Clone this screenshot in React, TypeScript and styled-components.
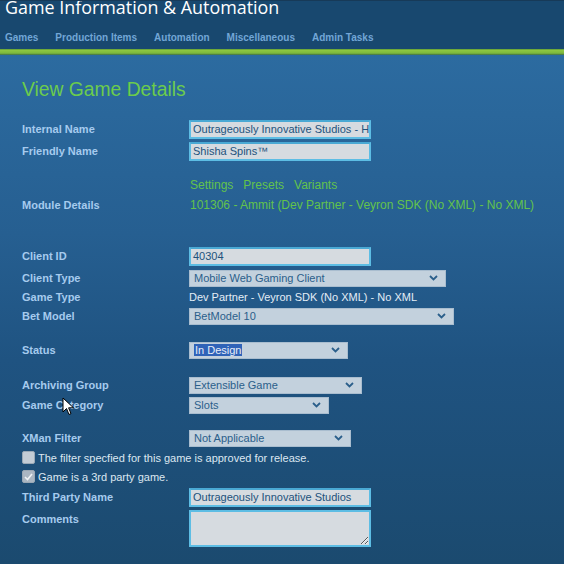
import React from "react";
import styled, { createGlobalStyle } from "styled-components";

const GlobalStyle = createGlobalStyle`
  html, body {
    margin: 0;
    padding: 0;
    height: 100%;
    overflow: hidden;
  }
  body {
    font-family: "Liberation Sans", Arial, sans-serif;
    background: #1b4a6f;
  }
`;

const Page = styled.div`
  position: relative;
  width: 564px;
  height: 564px;
  overflow: hidden;
  display: flex;
  flex-direction: column;
`;

const Header = styled.header`
  background: #18486f;
  border-top: 1px solid #173a58;
  display: flex;
  flex-direction: column;
  padding: 0 5px;
  height: 48px;
  overflow: hidden;
`;

const SiteTitle = styled.h1`
  margin: -6px 0 0;
  font-family: "Open Sans", "Liberation Sans", sans-serif;
  font-weight: 400;
  font-size: 17.9px;
  line-height: 24px;
  color: #ffffff;
`;

const Nav = styled.nav`
  display: flex;
  gap: 17px;
  margin-top: 12px;
`;

const NavLink = styled.a`
  font-size: 10px;
  font-weight: 700;
  color: #72a6d6;
  text-decoration: none;
  line-height: 14px;
`;

const GreenBar = styled.div`
  height: 6px;
  background: linear-gradient(to bottom, #5e9a36 0%, #8cc541 25%, #7db83c 70%, #3d6a49 100%);
`;

const Body = styled.main`
  flex: 1;
  background: linear-gradient(to bottom, #2c6ba0 0%, #265f91 35%, #1f5381 60%, #1b4a6f 100%);
  padding: 24px 0 0 22px;
`;

const PageTitle = styled.h2`
  margin: 0 0 17px;
  font-weight: 400;
  font-size: 19.3px;
  line-height: 22px;
  color: #6ccc4c;
`;

const Row = styled.div<{ $h?: number; $gap?: number; $top?: boolean }>`
  display: grid;
  grid-template-columns: 167px 1fr;
  align-items: ${(p) => (p.$top ? "start" : "center")};
  height: ${(p) => p.$h ?? 22}px;
  margin-top: ${(p) => p.$gap ?? 0}px;
`;

const Label = styled.label<{ $pt?: number }>`
  font-size: 11px;
  font-weight: 700;
  color: #a6cbee;
  padding-top: ${(p) => p.$pt ?? 0}px;
`;

const TextInput = styled.div<{ $w?: number }>`
  box-sizing: border-box;
  width: ${(p) => p.$w ?? 182}px;
  height: 19px;
  border: 2px solid #5dbde4;
  border-top-color: #4aa9d4;
  background: #d6dbe0;
  color: #22527c;
  font-size: 11px;
  line-height: 15px;
  padding: 0 2px;
  white-space: nowrap;
  overflow: hidden;
`;

const TextArea = styled.textarea`
  box-sizing: border-box;
  width: 182px;
  height: 37px;
  margin-top: 2px;
  border: 2px solid #5dbde4;
  background: #d6dbe0;
  color: #22527c;
  font-family: "Liberation Sans", Arial, sans-serif;
  font-size: 11px;
  padding: 2px;
  resize: both;
  outline: none;
`;

const SelectBox = styled.div<{ $w: number }>`
  box-sizing: border-box;
  width: ${(p) => p.$w}px;
  height: 17px;
  border: 1px solid #a9bdcf;
  background: #c3d1dd;
  color: #2b5f8b;
  font-size: 11px;
  display: flex;
  align-items: center;
  justify-content: space-between;
  padding: 0 7px 0 4px;
`;

const Selected = styled.span`
  background: #2f63b8;
  color: #e8eef8;
  padding: 0 1px;
  line-height: 13px;
`;

const Value = styled.span`
  font-size: 11px;
  color: #e3edf6;
`;

const GreenLinks = styled.div`
  display: flex;
  gap: 10px;
  font-size: 12px;
  color: #63c34b;
  padding-left: 1px;
`;

const GreenText = styled.span`
  font-size: 12px;
  color: #63c34b;
  padding-left: 1px;
`;

const CheckRow = styled.div`
  display: flex;
  align-items: center;
  gap: 3px;
  height: 19px;
  font-size: 11px;
  color: #dce7f1;
`;

const Box = styled.span<{ $checked?: boolean }>`
  width: 11px;
  height: 11px;
  border-radius: 2px;
  background: ${(p) => (p.$checked ? "#aab6c2" : "#c3ccd5")};
  border: 1px solid #9aa8b5;
  display: flex;
  align-items: center;
  justify-content: center;
`;

const Cursor = styled.svg`
  position: absolute;
  left: 62px;
  top: 397px;
`;

const Chevron = () => (
  <svg width="9" height="6" viewBox="0 0 9 6">
    <path d="M1 1 L4.5 4.5 L8 1" fill="none" stroke="#2b5f8b" strokeWidth="1.8" />
  </svg>
);

const Select: React.FC<{ w: number; children: React.ReactNode }> = ({ w, children }) => (
  <SelectBox $w={w}>
    <span>{children}</span>
    <Chevron />
  </SelectBox>
);

export default function App() {
  return (
    <Page>
      <GlobalStyle />
      <Header>
        <SiteTitle>Game Information &amp; Automation</SiteTitle>
        <Nav>
          <NavLink>Games</NavLink>
          <NavLink>Production Items</NavLink>
          <NavLink>Automation</NavLink>
          <NavLink>Miscellaneous</NavLink>
          <NavLink>Admin Tasks</NavLink>
        </Nav>
      </Header>
      <GreenBar />
      <Body>
        <PageTitle>View Game Details</PageTitle>
        <Row>
          <Label>Internal Name</Label>
          <TextInput>Outrageously Innovative Studios - HTML5 Shisha Spins</TextInput>
        </Row>
        <Row>
          <Label>Friendly Name</Label>
          <TextInput>Shisha Spins™</TextInput>
        </Row>
        <Row $h={20} $gap={13}>
          <span />
          <GreenLinks>
            <span>Settings</span>
            <span>Presets</span>
            <span>Variants</span>
          </GreenLinks>
        </Row>
        <Row $h={20}>
          <Label>Module Details</Label>
          <GreenText>101306 - Ammit (Dev Partner - Veyron SDK (No XML) - No XML)</GreenText>
        </Row>
        <Row $gap={30}>
          <Label>Client ID</Label>
          <TextInput>40304</TextInput>
        </Row>
        <Row>
          <Label>Client Type</Label>
          <Select w={257}>Mobile Web Gaming Client</Select>
        </Row>
        <Row $h={16}>
          <Label>Game Type</Label>
          <Value>Dev Partner - Veyron SDK (No XML) - No XML</Value>
        </Row>
        <Row>
          <Label>Bet Model</Label>
          <Select w={265}>BetModel 10</Select>
        </Row>
        <Row $gap={12}>
          <Label>Status</Label>
          <Select w={159}>
            <Selected>In Design</Selected>
          </Select>
        </Row>
        <Row $gap={13}>
          <Label>Archiving Group</Label>
          <Select w={173}>Extensible Game</Select>
        </Row>
        <Row $h={18}>
          <Label>Game Category</Label>
          <Select w={140}>Slots</Select>
        </Row>
        <Row $h={20} $gap={14}>
          <Label>XMan Filter</Label>
          <Select w={162}>Not Applicable</Select>
        </Row>
        <CheckRow>
          <Box />
          <span>The filter specfied for this game is approved for release.</span>
        </CheckRow>
        <CheckRow>
          <Box $checked>
            <svg width="9" height="8" viewBox="0 0 9 8">
              <path d="M1 4 L3.5 6.5 L8 1" fill="none" stroke="#eef2f5" strokeWidth="1.6" />
            </svg>
          </Box>
          <span>Game is a 3rd party game.</span>
        </CheckRow>
        <Row>
          <Label>Third Party Name</Label>
          <TextInput>Outrageously Innovative Studios</TextInput>
        </Row>
        <Row $h={40} $top>
          <Label $pt={5}>Comments</Label>
          <TextArea defaultValue="" />
        </Row>
      </Body>
      <Cursor width="13" height="20" viewBox="0 0 13 20">
        <path d="M1 1 L1 15 L4.5 11.5 L7 17.5 L9 16.6 L6.6 10.8 L11.5 10.8 Z" fill="#fff" stroke="#000" strokeWidth="1" />
      </Cursor>
    </Page>
  );
}
